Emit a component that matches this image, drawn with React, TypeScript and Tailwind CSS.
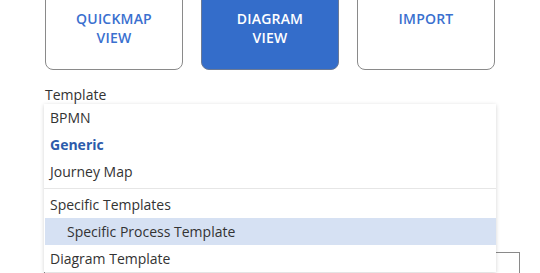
import React from "react";

interface Option {
    label: string;
    selected?: boolean;
    active?: boolean;
    indent?: boolean;
    divider?: boolean;
}

const options: Option[] = [
    { label: "BPMN" },
    { label: "Generic", selected: true },
    { label: "Journey Map", divider: true },
    { label: "Specific Templates" },
    { label: "Specific Process Template", active: true, indent: true },
    { label: "Diagram Template" },
];

const ViewButton = ({ lines, active }: { lines: string[]; active?: boolean }) => (
    <button
        className={
            active
                ? "w-[138px] h-[80px] rounded-[8px] border border-[#6b7a96] bg-[#346dca] text-white pt-[18px] flex flex-col items-center"
                : "w-[138px] h-[80px] rounded-[8px] border border-[#8a8a8a] bg-white text-[#3a70cf] pt-[18px] flex flex-col items-center"
        }
    >
        {lines.map((l) => (
            <span key={l} className="text-[14px] leading-[19px] font-semibold tracking-[0.2px]">
                {l}
            </span>
        ))}
    </button>
);

export default function App() {
    return (
        <div className="w-[540px] h-[273px] overflow-hidden bg-white font-['Open_Sans',sans-serif] text-[#333]">
            <div className="flex flex-row gap-[18px] pl-[45px] -mt-[10px]">
                <ViewButton lines={["QUICKMAP", "VIEW"]} />
                <ViewButton lines={["DIAGRAM", "VIEW"]} active />
                <ViewButton lines={["IMPORT"]} />
            </div>

            <div className="pl-[45px] pt-[15px] text-[14px] leading-[19px]">Template</div>

            <div className="relative pl-[44px]">
                <div className="h-[30px] w-[452px]" />
                <div className="mt-[118px] h-[40px] w-[476px] border border-[#8a8a8a]" />

                <div className="absolute left-[44px] top-0 w-[452px] bg-white shadow-[0_1px_4px_rgba(0,0,0,0.18)]">
                    {options.map((o) => (
                        <div key={o.label}>
                            <div
                                className={
                                    (o.active ? "bg-[#d6e1f3] " : "") +
                                    (o.indent ? "pl-[22px] " : "pl-[5px] ") +
                                    (o.selected ? "font-bold text-[#2c5bab] " : "") +
                                    "h-[27px] flex items-center text-[14px] ml-px"
                                }
                            >
                                {o.label}
                            </div>
                            {o.divider && <div className="mt-[3px] mb-[2px] h-px bg-[#e6e6e6]" />}
                        </div>
                    ))}
                </div>
            </div>
        </div>
    );
}
